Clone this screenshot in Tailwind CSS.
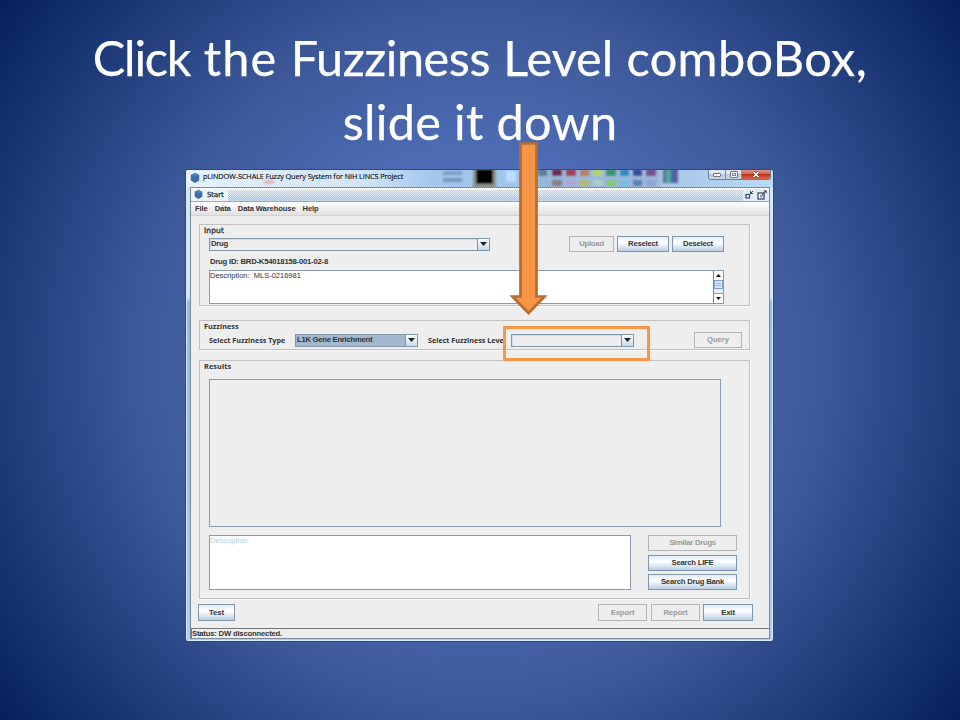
<!DOCTYPE html>
<html lang="en">
<head>
<meta charset="utf-8">
<title>Fuzziness Level</title>
<script src="https://cdn.jsdelivr.net/npm/@tailwindcss/browser@4"></script>
</head>
<body class="relative flex h-[720px] w-[960px] flex-col overflow-hidden bg-[radial-gradient(circle_at_50%_50%,#5b7bcb_0%,#5271bc_28%,#3d5898_58%,#1d3978_81%,#05205c_100%)] text-[7.7px] leading-none tracking-[-0.22px] text-[#333] font-['Liberation_Sans',sans-serif]">

<h1 class="flex h-[169px] shrink-0 flex-col items-center pt-[25px] text-[48.6px] leading-[64px] whitespace-nowrap text-white font-['Lato',sans-serif] [-webkit-text-stroke:0.25px_white]">
  <span class="tracking-[0px] [word-spacing:0.9px]"><span class="tracking-[-1.2px]">Click</span> <span class="tracking-[1.2px]">the</span> <span class="tracking-[-0.45px]">Fuzziness</span> Level <span class="tracking-[0.4px]">comboBox,</span></span><span class="tracking-[0.3px]">slide it down</span>
</h1>

<main class="ml-[185px] flex h-[473px] w-[589px] shrink-0 flex-col overflow-hidden rounded-[3px] border border-[#344a62] bg-[linear-gradient(#d3e5f7_27%,#8fbce8_28%,#a9cff2_100%)] pr-[3px] pb-[2px] pl-[4px] shadow-[inset_0_0_0_1px_#d9eafa]">
  <!-- Glass title bar -->
  <header class="relative flex h-[17px] shrink-0 items-center">
    <div class="absolute inset-y-0 right-[-3px] left-[-4px] bg-[linear-gradient(90deg,#e6f1fb_0%,#d2e4f6_30%,#a4c7eb_42%,#9ec4eb_60%,#a9c7e8_82%,#b9d9f7_100%)]"></div>
    <svg class="absolute inset-0 h-[17px] w-[579px]" viewBox="0 0 579 17">
      <defs><filter id="soft"><feGaussianBlur stdDeviation="1.2"/></filter>
      <linearGradient id="rain"><stop stop-color="#4f6090"/><stop offset=".35" stop-color="#5eb49a"/><stop offset=".65" stop-color="#3569a8"/><stop offset="1" stop-color="#8050a0"/></linearGradient></defs>
      <g filter="url(#soft)">
        <ellipse cx="79" cy="12" rx="6" ry="2.500" fill="#d58c7c" opacity=".45"/>
        <rect x="253" y="1" width="19" height="4" fill="#7f9fc6"/><rect x="253" y="8" width="19" height="4" fill="#7796c0"/>
        <rect x="283" y="-2" width="23" height="20" fill="#8b938b"/><rect x="286" y="-1" width="17" height="15" fill="#000"/>
        <rect x="316" y="1" width="10" height="11" fill="#bddcff"/>
        <rect x="345" y="-2" width="125" height="20" fill="#8ba4c0" opacity=".4"/>
        <g opacity=".85">
        <rect x="348" y="-1" width="9" height="7" fill="#59708a"/><rect x="362" y="-1" width="10" height="7" fill="#661638"/><rect x="376" y="-1" width="10" height="7" fill="#a42445"/><rect x="390" y="-1" width="9" height="7" fill="#b87952"/><rect x="403" y="-1" width="9" height="7" fill="#b9d45d"/><rect x="416" y="-1" width="10" height="7" fill="#248d60"/><rect x="430" y="-1" width="9" height="7" fill="#1684c2"/><rect x="443" y="-1" width="9" height="7" fill="#24388f"/><rect x="456" y="-1" width="10" height="7" fill="#713b86"/>
        <rect x="362" y="10" width="10" height="6" fill="#8e6e75"/><rect x="376" y="10" width="10" height="6" fill="#b3a1d1"/><rect x="390" y="10" width="9" height="6" fill="#bcb94d"/><rect x="403" y="10" width="9" height="6" fill="#b4d1cb"/><rect x="416" y="10" width="10" height="6" fill="#82c85b"/><rect x="430" y="10" width="9" height="6" fill="#6dbee8"/><rect x="443" y="10" width="9" height="6" fill="#4f79ad"/><rect x="456" y="10" width="10" height="6" fill="#8f9fd3"/>
        </g>
        <rect x="473" y="-1" width="15" height="14" fill="url(#rain)"/>
      </g>
    </svg>
    <svg class="relative mt-[-2px] h-[10px] w-[10px]" viewBox="0 0 10 10"><path d="M5 0 9.200 2v5.500L5 10 .8 7.500V2z" fill="#3a6fae"/><path d="M5 0 9.200 2 5 4 .8 2z" fill="#4d80bd"/></svg>
    <span class="relative mt-[-4px] ml-[3px] pt-px text-[7.3px] tracking-[-0.11px] whitespace-nowrap text-black font-['Open_Sans',sans-serif] [-webkit-text-stroke:0.1px_black]">pLINDOW-SCHALE Fuzzy Query System for NIH LINCS Project</span>
    <div class="absolute top-[-1px] right-[-1px] flex h-[11px] w-[63px] overflow-hidden rounded-b-[3px] border border-t-0 border-[#6e7e91]">
      <div class="flex w-[17px] items-center justify-center border-r border-[#7d8da0] bg-[linear-gradient(#dfe8f1_45%,#b4c5d8_50%,#ccdbea)]"><div class="mt-[2px] h-[4px] w-[8px] rounded-[1px] border border-[#6a7482] bg-white"></div></div>
      <div class="flex w-[16px] items-center justify-center border-r border-[#7d8da0] bg-[linear-gradient(#dfe8f1_45%,#b4c5d8_50%,#ccdbea)]"><div class="flex h-[7px] w-[8px] items-center justify-center rounded-[1px] border border-[#6a7482] bg-white"><div class="h-[3px] w-[4px] border border-[#7a8492]"></div></div></div>
      <div class="flex flex-1 items-center justify-center bg-[linear-gradient(#e3a498,#cf6a58_45%,#b92c14_50%,#d86848)]"><svg class="h-[7px] w-[8px]" viewBox="0 0 8 7"><path d="M1.500 1 6.500 6M6.500 1 1.500 6" stroke="#5f3636" stroke-width="2.800"/><path d="M1.500 1 6.500 6M6.500 1 1.500 6" stroke="#fff" stroke-width="1.700"/></svg></div>
    </div>
  </header>

  <section class="relative flex min-h-0 flex-1 flex-col border border-[#7b8b9b] bg-[#eee] font-bold">
    <!-- Internal frame title -->
    <div class="relative flex h-[14px] shrink-0 items-center border-b border-[#93abc9] bg-[linear-gradient(#fff,#e6eff9_50%,#bcd2e9)]">
      <svg class="absolute inset-0 h-[12px] w-full"><defs><pattern id="hatch" width="2" height="2" patternUnits="userSpaceOnUse"><rect width="1" height="1" fill="#9fbcdd"/><rect x="1" y="1" width="1" height="1" fill="#9fbcdd"/></pattern></defs><rect y="2" width="100%" height="10" fill="url(#hatch)" opacity=".75" shape-rendering="crispEdges"/></svg>
      <div class="relative flex h-[12px] w-[37px] shrink-0 items-center bg-[#edf3fa] pl-[3px]">
        <svg class="h-[9px] w-[9px] shrink-0" viewBox="0 0 10 10"><path d="M5 0 9.200 2v5.500L5 10 .8 7.500V2z" fill="#3a6fae"/><path d="M5 0 9.200 2 5 4 .8 2z" fill="#4d80bd"/></svg>
        <span class="ml-[4px] pt-px text-[7px] tracking-[-0.1px] font-['DejaVu_Sans',sans-serif] font-normal [-webkit-text-stroke:0.3px_#333]">Start</span>
      </div>
      <div class="relative ml-auto flex h-[12px] w-[26px] items-center gap-[3px] bg-[#e3edf7] pl-[2px]">
        <svg class="h-[10px] w-[9px]" viewBox="0 0 9 10"><rect x="1" y="4.500" width="3.500" height="3.500" fill="#fff" stroke="#304c78" stroke-width="1.300"/><path d="M5.500 1v2.500H8M5.500 3.500 8 1" fill="none" stroke="#333" stroke-width=".9"/></svg>
        <svg class="h-[10px] w-[10px]" viewBox="0 0 10 10"><rect x="1" y="3" width="6" height="6" fill="#fff" stroke="#304c78" stroke-width="1.300"/><rect x="3" y="5" width="2.500" height="2.500" fill="#7d93b4"/><path d="M5 5 7.500 2.500" stroke="#333"/><path d="M6.500.5H9.500V3.500z" fill="#222"/></svg>
      </div>
    </div>
    <nav class="flex h-[14px] shrink-0 items-center gap-[7px] border-b border-[#d4d4d4] bg-[linear-gradient(#fff,#e0e0e0)] pl-[4px] text-[7.6px] tracking-[-0.1px]">
      <span>File</span><span>Data</span><span>Data Warehouse</span><span>Help</span>
    </nav>

    <!-- Input -->
    <div class="mt-[8px] ml-[8px] flex h-[82px] w-[551px] shrink-0 flex-col border border-[#c0c0c0] shadow-[1px_1px_0_#fafafa]">
      <h2 class="mt-px ml-[4px] h-[10px] text-[7.5px] leading-[9px] tracking-[0.1px] font-['DejaVu_Sans',sans-serif] font-normal [-webkit-text-stroke:0.35px_#333]">Input</h2>
      <div class="ml-[9px] flex h-[16px] items-center">
        <div class="flex h-[13px] w-[281px] items-center border border-[#8296aa] pl-[1px] shadow-[inset_1px_1px_0_#cddceb]"><span>Drug</span>
          <div class="ml-auto flex h-full w-[12px] items-center justify-center border-l border-[#8296aa] bg-[linear-gradient(#fff,#c5d8ea)]"><svg class="h-[4px] w-[7px]" viewBox="0 0 7 4"><path d="M0 0h7L3.500 4z" fill="#222"/></svg></div></div>
        <button class="ml-[79px] h-[16px] w-[45px] border border-[#b5b5b5] text-[#999]">Upload</button>
        <button class="ml-[3px] h-[16px] w-[52px] border border-[#8296aa] bg-[linear-gradient(#dfebf7,#fff_40%,#b8cfe5)]">Reselect</button>
        <button class="ml-[3px] h-[16px] w-[52px] border border-[#8296aa] bg-[linear-gradient(#dfebf7,#fff_40%,#b8cfe5)]">Deselect</button>
      </div>
      <p class="mt-[5px] ml-[10px] h-[9px] leading-[9px] tracking-[-0.22px]">Drug ID: BRD-K54018158-001-02-8</p>
      <div class="mt-[4px] ml-[9px] flex h-[34px] w-[515px] shrink-0 border border-[#8a9bab] bg-white">
        <span class="pt-px text-[7.5px] font-normal tracking-normal whitespace-pre">Description:  MLS-0216981</span>
        <div class="ml-auto flex w-[10px] flex-col border-l border-[#7a8a99] bg-[#eee]">
          <div class="flex h-[9px] items-center justify-center bg-white"><svg class="h-[3px] w-[5px]" viewBox="0 0 5 3"><path d="M0 3h5L2.500 0z" fill="#111"/></svg></div>
          <div class="flex h-[9px] flex-col items-center justify-center gap-px border border-[#7f9fd0] bg-[#d5e5f5]"><div class="h-px w-[5px] bg-[#9db8dc]"></div><div class="h-px w-[5px] bg-[#9db8dc]"></div></div>
          <div class="mt-auto flex h-[10px] items-center justify-center border-t border-[#8a9bab] bg-white"><svg class="h-[3px] w-[5px]" viewBox="0 0 5 3"><path d="M0 0h5L2.500 3z" fill="#111"/></svg></div>
        </div>
      </div>
    </div>

    <!-- Fuzziness -->
    <div class="mt-[14px] ml-[8px] flex h-[30px] w-[551px] shrink-0 flex-col border border-[#c0c0c0] shadow-[1px_1px_0_#fafafa]">
      <h2 class="ml-[4px] h-[10px] text-[7.3px] leading-[10px] tracking-[0px] font-['Open_Sans',sans-serif]">Fuzziness</h2>
      <div class="ml-[9px] flex h-[18px] items-center">
        <span class="w-[86px] pt-px whitespace-nowrap font-['Open_Sans',sans-serif] text-[7.2px] tracking-[0px]">Select Fuzziness Type</span>
        <div class="flex h-[13px] w-[123px] items-center border border-[#8296aa] bg-[#a3b8cc] pl-[1px]"><span class="tracking-[-0.27px] whitespace-nowrap">L1K Gene Enrichment</span>
          <div class="ml-auto flex h-full w-[12px] items-center justify-center border-l border-[#8296aa] bg-[linear-gradient(#fff,#c5d8ea)]"><svg class="h-[4px] w-[7px]" viewBox="0 0 7 4"><path d="M0 0h7L3.500 4z" fill="#222"/></svg></div></div>
        <span class="ml-[10px] w-[83px] pt-px whitespace-nowrap font-['Open_Sans',sans-serif] text-[7.2px] tracking-[0px]">Select Fuzziness Level</span>
        <div class="flex h-[13px] w-[123px] items-center border border-[#8296aa] shadow-[inset_1px_1px_0_#cddceb]">
          <div class="ml-auto flex h-full w-[12px] items-center justify-center border-l border-[#8296aa] bg-[linear-gradient(#fff,#c5d8ea)]"><svg class="h-[4px] w-[7px]" viewBox="0 0 7 4"><path d="M0 0h7L3.500 4z" fill="#222"/></svg></div></div>
        <button class="ml-[60px] h-[16px] w-[48px] border border-[#b5b5b5] tracking-[-0.05px] text-[#999]">Query</button>
      </div>
    </div>

    <!-- Results -->
    <div class="mt-[10px] ml-[8px] flex h-[239px] w-[551px] shrink-0 flex-col border border-[#c0c0c0] shadow-[1px_1px_0_#fafafa]">
      <h2 class="ml-[4px] h-[10px] text-[7.3px] leading-[10px] tracking-[0.1px] font-['Open_Sans',sans-serif]">Results</h2>
      <div class="mt-[8px] ml-[9px] h-[148px] w-[512px] shrink-0 border border-[#8a9bab]"></div>
      <div class="mt-[8px] ml-[9px] flex shrink-0">
        <div class="h-[55px] w-[422px] border border-[#8a9bab] bg-white pt-px text-[7.5px] font-normal tracking-normal text-[#b8cfe5]">Description:</div>
        <div class="ml-[17px] flex w-[89px] flex-col justify-between">
          <button class="h-[16px] border border-[#b5b5b5] tracking-[-0.25px] text-[#999]">Similar Drugs</button>
          <button class="h-[16px] border border-[#8296aa] bg-[linear-gradient(#dfebf7,#fff_40%,#b8cfe5)]">Search LIFE</button>
          <button class="h-[16px] border border-[#8296aa] bg-[linear-gradient(#dfebf7,#fff_40%,#b8cfe5)]">Search Drug Bank</button>
        </div>
      </div>
    </div>

    <div class="mt-[5px] ml-[7px] flex h-[17px] w-[555px] shrink-0">
      <button class="w-[37px] border border-[#8296aa] bg-[linear-gradient(#dfebf7,#fff_40%,#b8cfe5)] tracking-[0px]">Test</button>
      <button class="ml-auto w-[49px] border border-[#b5b5b5] tracking-[-0.1px] text-[#999]">Export</button>
      <button class="ml-[4px] w-[49px] border border-[#b5b5b5] tracking-[-0.1px] text-[#999]">Report</button>
      <button class="ml-[3px] w-[50px] border border-[#8296aa] bg-[linear-gradient(#dfebf7,#fff_40%,#b8cfe5)] tracking-[-0.1px]">Exit</button>
    </div>
    <footer class="mt-auto flex h-[10px] shrink-0 items-center border-t border-l border-[#777] tracking-[-0.2px]">Status: DW disconnected.</footer>
  </section>
</main>

<!-- Callout arrow and frame over the window -->
<div class="absolute top-[326px] left-[503px] h-[35px] w-[147px] rounded-[1px] border-3 border-[#f79646]"></div>
<svg class="absolute top-[140px] left-[505px] h-[178px] w-[48px]" viewBox="505 140 48 178"><path d="M520.500 143.500H536.500V296.500H544.500L528.500 313 512.500 296.500H520.500z" fill="#f79646" stroke="#b66d31" stroke-width="2.700"/></svg>
</body>
</html>
